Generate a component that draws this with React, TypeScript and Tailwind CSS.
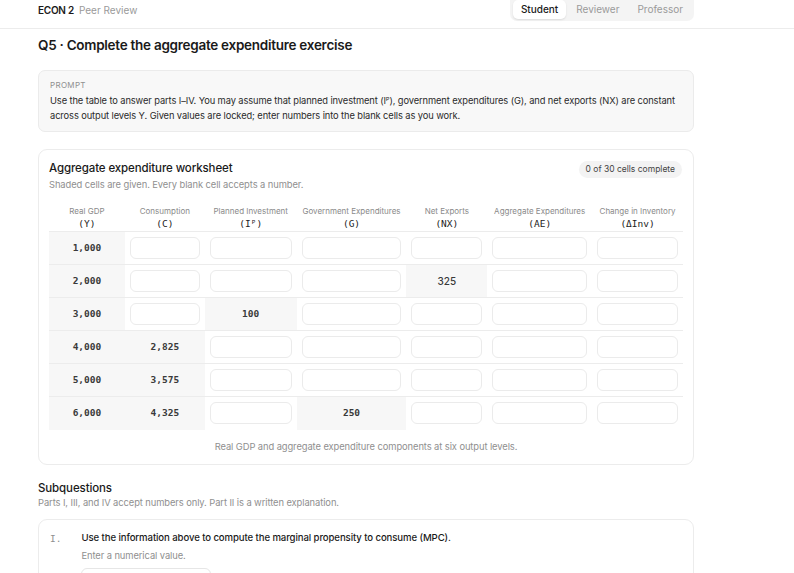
import React from "react";

const cols = [
  { label: "Real GDP", sym: "(Y)" },
  { label: "Consumption", sym: "(C)" },
  { label: "Planned Investment", sym: "(Iᴾ)" },
  { label: "Government Expenditures", sym: "(G)" },
  { label: "Net Exports", sym: "(NX)" },
  { label: "Aggregate Expenditures", sym: "(AE)" },
  { label: "Change in Inventory", sym: "(ΔInv)" },
];

const widths = ["w-[76px]", "w-[80px]", "w-[92px]", "w-[110px]", "w-[81px]", "w-[105px]", "w-[91px]"];

// null = blank input cell
const rows: (string | null)[][] = [
  ["1,000", null, null, null, null, null, null],
  ["2,000", null, null, null, "325", null, null],
  ["3,000", null, "100", null, null, null, null],
  ["4,000", "2,825", null, null, null, null, null],
  ["5,000", "3,575", null, null, null, null, null],
  ["6,000", "4,325", null, "250", null, null, null],
];

const mono = { fontFamily: "'DejaVu Sans Mono', 'Liberation Mono', monospace" };

export default function App() {
  return (
    <div
      className="min-h-screen bg-white text-[#1a1a1a]"
      style={{ fontFamily: "Inter, 'Noto Sans', sans-serif" }}
    >
      {/* Top bar */}
      <div className="h-[29px] border-b border-[#ececec] px-[38px]">
        <div className="w-[656px] flex items-start justify-between">
          <div className="flex items-center gap-[5px] pt-[3px] text-[10px]">
            <span className="font-semibold tracking-tight">ECON 2</span>
            <span className="text-[#9a9a9a]">Peer Review</span>
          </div>
          <div className="flex items-center gap-[2px] bg-[#f4f4f4] rounded-b-[7px] px-[3px] pb-[2px] pt-[1px] text-[10px] -mt-[1px]">
            <span className="bg-white rounded-[5px] shadow-[0_1px_2px_rgba(0,0,0,0.1)] px-[8px] py-[2px] font-medium">
              Student
            </span>
            <span className="px-[8px] py-[2px] text-[#9a9a9a]">Reviewer</span>
            <span className="px-[8px] py-[2px] text-[#9a9a9a]">Professor</span>
          </div>
        </div>
      </div>

      <div className="px-[38px] w-[732px]">
        <h1 className="mt-[7px] text-[13.5px] font-semibold tracking-[-0.02em] leading-[18px]">
          Q5 · Complete the aggregate expenditure exercise
        </h1>

        {/* Prompt */}
        <div className="mt-[16px] rounded-[7px] border border-[#ebebeb] bg-[#f8f8f8] px-[11px] pt-[8px] pb-[8px]">
          <div className="text-[8px] uppercase tracking-[0.04em] text-[#8f8f8f] leading-[12px]">Prompt</div>
          <p className="mt-[2px] text-[9.3px] tracking-[-0.01em] leading-[15px] text-[#2a2a2a]">
            Use the table to answer parts I–IV. You may assume that planned investment (Iᴾ), government
            expenditures (G), and net exports (NX) are constant across output levels Y. Given values are
            locked; enter numbers into the blank cells as you work.
          </p>
        </div>

        {/* Worksheet */}
        <div className="mt-[17px] rounded-[9px] border border-[#ececec] px-[10px] pt-[10px] pb-[10px]">
          <div className="flex items-start justify-between">
            <div>
              <div className="text-[11.5px] font-medium tracking-[-0.01em] leading-[16px]">
                Aggregate expenditure worksheet
              </div>
              <div className="mt-[2px] text-[9.4px] tracking-[-0.01em] text-[#8f8f8f]">
                Shaded cells are given. Every blank cell accepts a number.
              </div>
            </div>
            <div className="mr-[1px] mt-[1px] rounded-full bg-[#f3f3f3] px-[7px] py-[2px] text-[8.5px] text-[#444]">
              0 of 30 cells complete
            </div>
          </div>

          <table className="mt-[14px] border-collapse">
            <thead>
              <tr className="border-b border-[#ececec]">
                {cols.map((c, i) => (
                  <th key={i} className={`${widths[i]} pb-[1px] font-normal text-center`}>
                    <div className="text-[8px] leading-[11px] text-[#8a8a8a]">{c.label}</div>
                    <div className="text-[9.5px] leading-[13px] text-[#222]" style={mono}>
                      {c.sym}
                    </div>
                  </th>
                ))}
              </tr>
            </thead>
            <tbody>
              {rows.map((r, ri) => (
                <tr key={ri} className={ri < rows.length - 1 ? "border-b border-[#ececec]" : ""}>
                  {r.map((v, ci) =>
                    v === null ? (
                      <td key={ci} className="h-[33px] px-[5px]">
                        <div className="h-[22px] rounded-[6px] border border-[#ebebeb] bg-white" />
                      </td>
                    ) : (
                      <td
                        key={ci}
                        className="h-[33px] bg-[#f7f7f7] text-center text-[9.5px] font-semibold text-[#3a3a3a]"
                        style={ci === 4 ? { fontFamily: "Inter, sans-serif", fontSize: "10px", fontWeight: 500 } : mono}
                      >
                        {v}
                      </td>
                    )
                  )}
                </tr>
              ))}
            </tbody>
          </table>

          <div className="mt-[10px] text-center text-[9.4px] tracking-[-0.01em] text-[#8f8f8f]">
            Real GDP and aggregate expenditure components at six output levels.
          </div>
        </div>

        {/* Subquestions */}
        <div className="mt-[15px] text-[11.5px] font-medium tracking-[-0.01em] leading-[16px]">Subquestions</div>
        <div className="text-[9.4px] tracking-[-0.01em] text-[#8f8f8f]">
          Parts I, III, and IV accept numbers only. Part II is a written explanation.
        </div>

        <div className="mt-[9px] rounded-[9px] border border-[#ececec] px-[11px] pt-[11px] pb-[10px] flex gap-[20px]">
          <div className="text-[9.5px] text-[#8f8f8f] pt-[1px]" style={mono}>
            I.
          </div>
          <div className="flex-1">
            <div className="text-[9.6px] font-medium tracking-[-0.01em] text-[#1a1a1a]">
              Use the information above to compute the marginal propensity to consume (MPC).
            </div>
            <div className="mt-[4px] text-[9.4px] tracking-[-0.01em] text-[#8f8f8f]">Enter a numerical value.</div>
            <div className="mt-[5px] h-[24px] w-[130px] rounded-[6px] border border-[#e6e6e6]" />
          </div>
        </div>
      </div>
    </div>
  );
}
